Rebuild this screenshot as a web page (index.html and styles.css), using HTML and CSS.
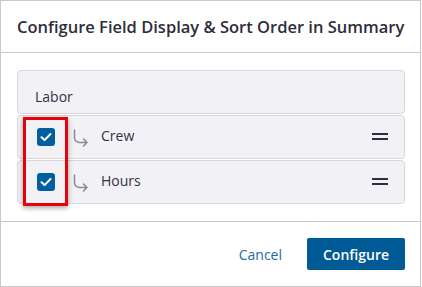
FILE: index.html
```html
<!DOCTYPE html>
<html lang="en">
<head>
  <meta charset="UTF-8" />
  <title>Configure Field Display</title>
  <link rel="stylesheet" href="styles.css">
</head>
<body>

  <div class="dialog">
    <!-- Title bar -->
    <div class="dialog-header">
      <h2>Configure Field Display &amp; Sort Order in Summary</h2>
    </div>

    <!-- Field list -->
    <div class="dialog-body">
      <div class="field-list">
        <div class="group-row">Labor</div>

        <div class="field-row">
          <span class="check">
            <svg width="18" height="18" viewBox="0 0 18 18"><path d="M4.5 9.2 L7.6 12.1 L13.5 6" fill="none" stroke="#fff" stroke-width="2" stroke-linecap="round" stroke-linejoin="round"/></svg>
          </span>
          <svg class="sub-arrow" width="16" height="18" viewBox="0 0 16 18"><path d="M1.5 1 V8.5 A5 5 0 0 0 6.5 13.5 H14 M10.5 10 L14 13.5 L10.5 17" fill="none" stroke="#8b8a92" stroke-width="1.5" stroke-linecap="round" stroke-linejoin="round"/></svg>
          <span class="field-name">Crew</span>
          <span class="handle"></span>
        </div>

        <div class="field-row">
          <span class="check">
            <svg width="18" height="18" viewBox="0 0 18 18"><path d="M4.5 9.2 L7.6 12.1 L13.5 6" fill="none" stroke="#fff" stroke-width="2" stroke-linecap="round" stroke-linejoin="round"/></svg>
          </span>
          <svg class="sub-arrow" width="16" height="18" viewBox="0 0 16 18"><path d="M1.5 1 V8.5 A5 5 0 0 0 6.5 13.5 H14 M10.5 10 L14 13.5 L10.5 17" fill="none" stroke="#8b8a92" stroke-width="1.5" stroke-linecap="round" stroke-linejoin="round"/></svg>
          <span class="field-name">Hours</span>
          <span class="handle"></span>
        </div>

        <!-- Highlight around the checkboxes -->
        <div class="highlight"></div>
      </div>
    </div>

    <!-- Actions -->
    <div class="dialog-footer">
      <button class="btn-link">Cancel</button>
      <button class="btn-primary">Configure</button>
    </div>
  </div>

</body>
</html>
```

FILE: styles.css
```css
/* Dialog shell */
body {
  margin: 0;
  font-family: "Open Sans", "Liberation Sans", sans-serif;
  background: #ffffff;
  color: #2e2d3b;
}

.dialog {
  width: 421px;
  height: 287px;
  box-sizing: border-box;
  border: 1px solid #c9c8ce;
  display: flex;
  flex-direction: column;
}

.dialog-header {
  height: 51px;
  padding: 0 16px;
  display: flex;
  align-items: center;
  border-bottom: 1px solid #c9c8ce;
}

.dialog-header h2 {
  margin: 0;
  font-size: 16.5px;
  font-weight: 600;
  color: #2e2d3b;
  white-space: nowrap;
}

.dialog-body {
  padding: 17px 15px 17px 16px;
  border-bottom: 1px solid #c9c8ce;
}

/* List of fields */
.field-list {
  position: relative;
  display: flex;
  flex-direction: column;
  gap: 1px;
}

.group-row,
.field-row {
  height: 44px;
  box-sizing: border-box;
  background: #f2f1f6;
  border: 1px solid #d8d7dd;
  border-radius: 4px;
  font-size: 14px;
  color: #333340;
}

.group-row {
  padding: 16px 17px 0;
  line-height: 20px;
}

.field-row {
  display: flex;
  align-items: center;
  padding: 0 16px 0 19px;
}

.check {
  width: 18px;
  height: 18px;
  border-radius: 3px;
  background: #005f9e;
  display: flex;
}

.sub-arrow {
  margin-left: 18px;
  margin-top: 1px;
}

.field-name {
  margin-left: 12px;
  flex: 1;
  margin-top: -3px;
}

/* Drag handle: two bars */
.handle {
  width: 16px;
  height: 7px;
  border-top: 2px solid #2f2e3d;
  border-bottom: 2px solid #2f2e3d;
  box-sizing: border-box;
  margin-top: -1px;
}

/* Red annotation box */
.highlight {
  position: absolute;
  left: 6px;
  top: 47px;
  width: 45px;
  height: 89px;
  box-sizing: border-box;
  border: 3px solid #e8000b;
  box-shadow: 0 2px 5px rgba(0, 0, 0, 0.35);
}

/* Footer buttons */
.dialog-footer {
  flex: 1;
  display: flex;
  justify-content: flex-end;
  align-items: center;
  gap: 25px;
  padding: 0 15px 0 0;
}

.btn-link,
.btn-primary {
  font-family: "Open Sans", "Liberation Sans", sans-serif;
  font-size: 14px;
  border: none;
  cursor: pointer;
}

.btn-link {
  background: none;
  padding: 0;
  color: #1d6ba3;
}

.btn-primary {
  width: 98px;
  height: 32px;
  border-radius: 2px;
  background: #005a96;
  color: #ffffff;
  font-weight: 600;
}
```
